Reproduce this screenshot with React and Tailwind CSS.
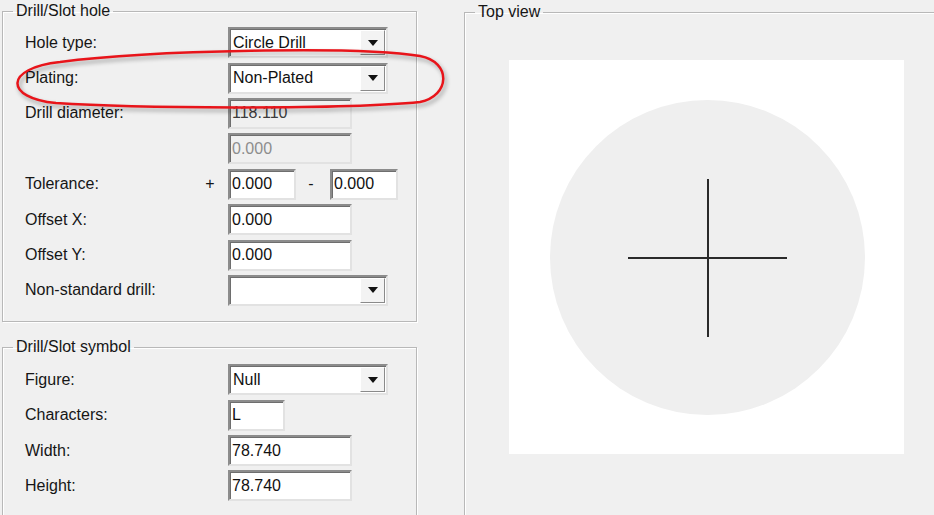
import React from 'react';

const sunken =
  'border-2 border-t-[#8c8c8c] border-l-[#8c8c8c] border-r-[#e2e2e2] border-b-[#e2e2e2] shadow-[inset_1px_1px_0_#6e6e6e]';

function Field({ value, width = 'w-[124px]', disabled, readOnly }) {
  const bg = disabled || readOnly ? 'bg-[#f0f0f0]' : 'bg-white';
  const color = disabled ? 'text-[#8d8d8d]' : readOnly ? 'text-[#3c3c3c]' : 'text-[#111]';
  return (
    <div className={`${sunken} ${bg} ${color} ${width} h-[31px] shrink-0 flex items-center pl-[2px] leading-none`}>
      {value}
    </div>
  );
}

function Combo({ value }) {
  return (
    <div className={`${sunken} bg-white w-[160px] h-[31px] shrink-0 flex items-stretch leading-none`}>
      <span className="flex-1 flex items-center pl-[3px] text-[#111]">{value}</span>
      <span className="w-[25px] my-[1px] mr-[1px] bg-[#f3f3f3] border border-t-white border-l-white border-r-[#8a8a8a] border-b-[#8a8a8a] flex items-center justify-center">
        <svg width="10" height="6" viewBox="0 0 10 6">
          <path d="M0 0 H10 L5 6 Z" fill="#111" />
        </svg>
      </span>
    </div>
  );
}

function Row({ label, children }) {
  return (
    <div className="flex items-center h-[35.4px]">
      <span className="w-[225px] shrink-0 pl-[22px]">{label}</span>
      {children}
    </div>
  );
}

function Group({ title, className, children }) {
  return (
    <fieldset className={`border border-[#b8b8b8] shadow-[inset_1px_1px_0_#fff,1px_1px_0_#fff] ${className}`}>
      <legend className="ml-[10px] px-[3px] leading-[18px]">{title}</legend>
      {children}
    </fieldset>
  );
}

export default function App() {
  return (
    <div className="relative w-[934px] h-[515px] overflow-hidden bg-[#f0f0f0] text-[16px] text-[#161616] font-['Liberation_Sans',Arial,sans-serif]">
      <div className="flex items-start">
        {/* Left column */}
        <div className="ml-[2px] w-[415px] shrink-0 mt-[2px] flex flex-col">
          <Group title="Drill/Slot hole" className="pt-[5px] pb-[13px]">
            <Row label="Hole type:">
              <Combo value="Circle Drill" />
            </Row>
            <Row label="Plating:">
              <Combo value="Non-Plated" />
            </Row>
            <Row label="Drill diameter:">
              <Field value="118.110" readOnly />
            </Row>
            <Row label="">
              <Field value="0.000" disabled />
            </Row>
            <div className="flex items-center h-[35.4px]">
              <span className="w-[200px] shrink-0 pl-[22px]">Tolerance:</span>
              <span className="w-[14px] shrink-0 text-center">+</span>
              <span className="w-[11px] shrink-0" />
              <Field value="0.000" width="w-[68px]" />
              <span className="w-[34px] shrink-0 text-center pr-[4px]">-</span>
              <Field value="0.000" width="w-[68px]" />
            </div>
            <Row label="Offset X:">
              <Field value="0.000" />
            </Row>
            <Row label="Offset Y:">
              <Field value="0.000" />
            </Row>
            <Row label="Non-standard drill:">
              <Combo value="" />
            </Row>
          </Group>

          <Group title="Drill/Slot symbol" className="mt-[16px] pt-[6px] pb-[20px]">
            <Row label="Figure:">
              <Combo value="Null" />
            </Row>
            <Row label="Characters:">
              <Field value="L" width="w-[57px]" />
            </Row>
            <Row label="Width:">
              <Field value="78.740" />
            </Row>
            <Row label="Height:">
              <Field value="78.740" />
            </Row>
          </Group>
        </div>

        {/* Right column */}
        <Group title="Top view" className="ml-[47px] mt-[3px] w-[490px] h-[530px] shrink-0">
          <div className="pt-[39px] pl-[44px]">
            <div className="w-[395px] h-[394px] bg-white">
              <svg width="395" height="394" viewBox="0 0 395 394">
                <circle cx="198.5" cy="197.5" r="157.5" fill="#efefef" />
                <line x1="199" y1="119" x2="199" y2="277" stroke="#2a2a2a" strokeWidth="2" />
                <line x1="119" y1="198" x2="278" y2="198" stroke="#2a2a2a" strokeWidth="2" />
              </svg>
            </div>
          </div>
        </Group>
      </div>

      {/* Red annotation loop */}
      <svg
        className="absolute left-0 top-0 pointer-events-none drop-shadow-[2px_3px_2px_rgba(0,0,0,0.35)]"
        width="470"
        height="130"
        viewBox="0 0 470 130"
      >
        <path
          d="M60 62 C150 50 360 46 420 56 C452 62 450 96 420 102 C340 110 130 108 56 103 C4 98 4 68 60 62 Z"
          fill="none"
          stroke="#e8141a"
          strokeWidth="2.5"
        />
      </svg>
    </div>
  );
}
